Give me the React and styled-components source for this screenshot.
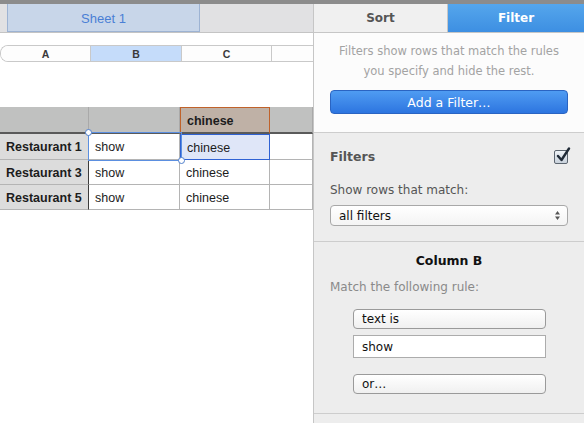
import React from 'react';
import styled, { createGlobalStyle } from 'styled-components';

const GlobalStyle = createGlobalStyle`
  html, body {
    margin: 0;
    padding: 0;
    background: #ffffff;
  }
  * {
    box-sizing: border-box;
  }
`;

const table = 'Liberation Sans, Arial, sans-serif';
const mac = '"DejaVu Sans", Verdana, sans-serif';

const Window = styled.div`
  width: 584px;
  height: 423px;
  overflow: hidden;
  display: flex;
  flex-direction: column;
  border-top: 4px solid #8c8c8c;
`;

const Main = styled.div`
  flex: 1;
  display: flex;
  min-height: 0;
`;

/* ---------- sheet side ---------- */

const SheetPane = styled.div`
  width: 313px;
  flex: none;
  display: flex;
  flex-direction: column;
  background: #ffffff;
`;

const TabBar = styled.div`
  height: 29px;
  flex: none;
  display: flex;
  padding-left: 7px;
  background: #e1e1e3;
  border-bottom: 1px solid #c4c4c4;
`;

const SheetTab = styled.div`
  width: 193px;
  display: flex;
  align-items: center;
  justify-content: center;
  padding-top: 1px;
  background: #c8d6e9;
  border-left: 1px solid #9db3d3;
  border-right: 1px solid #9db3d3;
  border-bottom: 1px solid #9db3d3;
  color: #4a7fd5;
  font: 13px ${table};
`;

const ColumnHeaders = styled.div`
  margin-top: 12px;
  height: 17px;
  display: grid;
  grid-template-columns: 89px 91px 90px 1fr;
  border: 1px solid #c9c9c9;
  border-right: none;
  border-radius: 8px 0 0 8px;
  overflow: hidden;
`;

const ColumnLetter = styled.div`
  display: flex;
  align-items: center;
  justify-content: center;
  font: bold 10.5px ${table};
  color: #3a3a3a;
  background: ${(p) => (p.$active ? '#c5dcfa' : '#fdfdfd')};
  border-left: ${(p) => (p.$first ? 'none' : '1px solid #c9c9c9')};
`;

const Grid = styled.div`
  margin-top: 45px;
  position: relative;
  display: grid;
  grid-template-columns: 89px 91px 90px 1fr;
  grid-template-rows: 27px 26px 25px 25px;
`;

const Cell = styled.div`
  display: flex;
  align-items: center;
  padding: 1px 0 0 6px;
  font: ${(p) => (p.$bold ? 'bold ' : '')}12.5px ${table};
  color: #1c1c1c;
  background: ${(p) => p.$bg || '#ffffff'};
  border-right: 1px solid ${(p) => p.$rightLine || '#b4b4b4'};
  border-bottom: 1px solid ${(p) => p.$bottomLine || '#b4b4b4'};
  white-space: nowrap;
`;

const HeaderCell = styled(Cell)`
  background: #c0c1c0;
  border-right: 1px solid #a9a9a9;
  border-bottom: 2px solid #5a5a5a;
`;

const FilterHeadCell = styled(HeaderCell)`
  background: #bfb1a6;
  border: 1px solid #c0622a;
  border-bottom: 2px solid #5a5a5a;
`;

const ActiveCell = styled(Cell)`
  background: #dfe6f8;
  border: 1px solid #2f62d4;
`;

const Selection = styled.div`
  position: absolute;
  left: 88px;
  top: 25px;
  width: 94px;
  height: 29px;
  border: 1px solid #5b8fe0;
  pointer-events: none;
`;

const Handle = styled.span`
  position: absolute;
  width: 7px;
  height: 7px;
  border-radius: 50%;
  background: #ffffff;
  border: 1px solid #4f7fcc;
  ${(p) => (p.$end ? 'right: -4px; bottom: -4px;' : 'left: -4px; top: -4px;')}
`;

/* ---------- sidebar ---------- */

const Sidebar = styled.div`
  flex: 1;
  display: flex;
  flex-direction: column;
  background: #ededed;
  border-left: 1px solid #c6c6c6;
  font-family: ${mac};
`;

const SideTabs = styled.div`
  height: 29px;
  flex: none;
  display: grid;
  grid-template-columns: 134px 1fr;
  border-bottom: 1px solid #c6c6c6;
`;

const SideTab = styled.div`
  display: flex;
  align-items: center;
  justify-content: center;
  font-size: 12px;
  font-weight: bold;
  color: ${(p) => (p.$on ? '#ffffff' : '#555555')};
  background: ${(p) => (p.$on ? 'linear-gradient(#55a6ec, #3d8fe2)' : '#f0f0f0')};
  border-right: ${(p) => (p.$on ? 'none' : '1px solid #c6c6c6')};
`;

const Section = styled.div`
  display: flex;
  flex-direction: column;
  padding: ${(p) => p.$pad};
  background: ${(p) => p.$bg || '#ededed'};
  border-bottom: 1px solid #cdcdcd;
`;

const Hint = styled.p`
  margin: 0;
  text-align: center;
  font-size: 11.5px;
  line-height: 20px;
  color: #a3a3a3;
`;

const PrimaryButton = styled.div`
  margin-top: 9px;
  height: 24px;
  display: flex;
  align-items: center;
  justify-content: center;
  border-radius: 4px;
  border: 1px solid #2a64c2;
  background: linear-gradient(#4f9cf2, #2d75e0);
  color: #ffffff;
  font-size: 12.5px;
`;

const HeadRow = styled.div`
  display: flex;
  align-items: center;
  justify-content: space-between;
`;

const Title = styled.div`
  font-size: 12.5px;
  font-weight: bold;
  color: ${(p) => (p.$dark ? '#111111' : '#555555')};
  text-align: ${(p) => (p.$center ? 'center' : 'left')};
`;

const Label = styled.div`
  margin-top: ${(p) => p.$top || '0'};
  font-size: 12px;
  color: ${(p) => (p.$soft ? '#8a8a8a' : '#555555')};
`;

const CheckBox = styled.div`
  width: 14px;
  height: 14px;
  border-radius: 2px;
  border: 1px solid #5d6670;
  background: linear-gradient(#eef2f6, #c9d2dc);
  position: relative;

  svg {
    position: absolute;
    left: 1px;
    top: -4px;
  }
`;

const Select = styled.div`
  margin-top: 8px;
  height: 21px;
  display: flex;
  align-items: center;
  justify-content: space-between;
  padding: 0 6px 0 8px;
  background: linear-gradient(#ffffff, #f4f4f4);
  border: 1px solid #a8a8a8;
  border-radius: 4px;
  font-size: 12px;
  color: #111111;
`;

const Rule = styled.div`
  margin: 15px 22px 0 23px;
  display: flex;
  flex-direction: column;
`;

const PopButton = styled.div`
  height: 20px;
  margin-top: ${(p) => p.$top || '0'};
  display: flex;
  align-items: center;
  padding-left: 8px;
  border: 1px solid #9a9a9a;
  border-radius: 4px;
  background: linear-gradient(#ffffff, #f0f0f0);
  font-size: 12px;
  color: #111111;
`;

const TextField = styled.div`
  height: 23px;
  margin-top: 6px;
  display: flex;
  align-items: center;
  padding-left: 8px;
  border: 1px solid #acacac;
  background: #ffffff;
  font-size: 12px;
  color: #111111;
`;

const Arrows = () => (
  <svg width="7" height="11" viewBox="0 0 7 11">
    <path d="M3.5 1 L6 4.5 H1 Z" fill="#555" />
    <path d="M3.5 10 L6 6.5 H1 Z" fill="#555" />
  </svg>
);

const Tick = () => (
  <svg width="15" height="16" viewBox="0 0 15 16">
    <path d="M2 9 L5.5 13 L13 1.5" fill="none" stroke="#1f2a36" strokeWidth="2.4" strokeLinecap="round" strokeLinejoin="round" />
  </svg>
);

const rows = ['Restaurant 1', 'Restaurant 3', 'Restaurant 5'];

export default function App() {
  return (
    <>
      <GlobalStyle />
      <Window>
        <Main>
          <SheetPane>
            <TabBar>
              <SheetTab>Sheet 1</SheetTab>
            </TabBar>
            <ColumnHeaders>
              <ColumnLetter $first>A</ColumnLetter>
              <ColumnLetter $active>B</ColumnLetter>
              <ColumnLetter>C</ColumnLetter>
              <ColumnLetter />
            </ColumnHeaders>
            <Grid>
              <HeaderCell />
              <HeaderCell />
              <FilterHeadCell $bold>chinese</FilterHeadCell>
              <HeaderCell />
              {rows.map((name, i) => (
                <React.Fragment key={name}>
                  <Cell $bold $bg="#dcdcdc" $rightLine="#3c3c3c">{name}</Cell>
                  <Cell>show</Cell>
                  {i === 0 ? <ActiveCell>chinese</ActiveCell> : <Cell>chinese</Cell>}
                  <Cell />
                </React.Fragment>
              ))}
              <Selection>
                <Handle />
                <Handle $end />
              </Selection>
            </Grid>
          </SheetPane>

          <Sidebar>
            <SideTabs>
              <SideTab>Sort</SideTab>
              <SideTab $on>Filter</SideTab>
            </SideTabs>

            <Section $bg="#fcfcfc" $pad="8px 16px 18px 16px">
              <Hint>
                Filters show rows that match the rules
                <br />
                you specify and hide the rest.
              </Hint>
              <PrimaryButton>Add a Filter…</PrimaryButton>
            </Section>

            <Section $pad="16px 16px 15px 16px">
              <HeadRow>
                <Title>Filters</Title>
                <CheckBox>
                  <Tick />
                </CheckBox>
              </HeadRow>
              <Label $top="19px">Show rows that match:</Label>
              <Select>
                all filters
                <Arrows />
              </Select>
            </Section>

            <Section $pad="11px 16px 19px 16px">
              <Title $dark $center>Column B</Title>
              <Label $soft $top="12px">Match the following rule:</Label>
              <Rule>
                <PopButton>text is</PopButton>
                <TextField>show</TextField>
                <PopButton $top="16px">or…</PopButton>
              </Rule>
            </Section>
          </Sidebar>
        </Main>
      </Window>
    </>
  );
}
